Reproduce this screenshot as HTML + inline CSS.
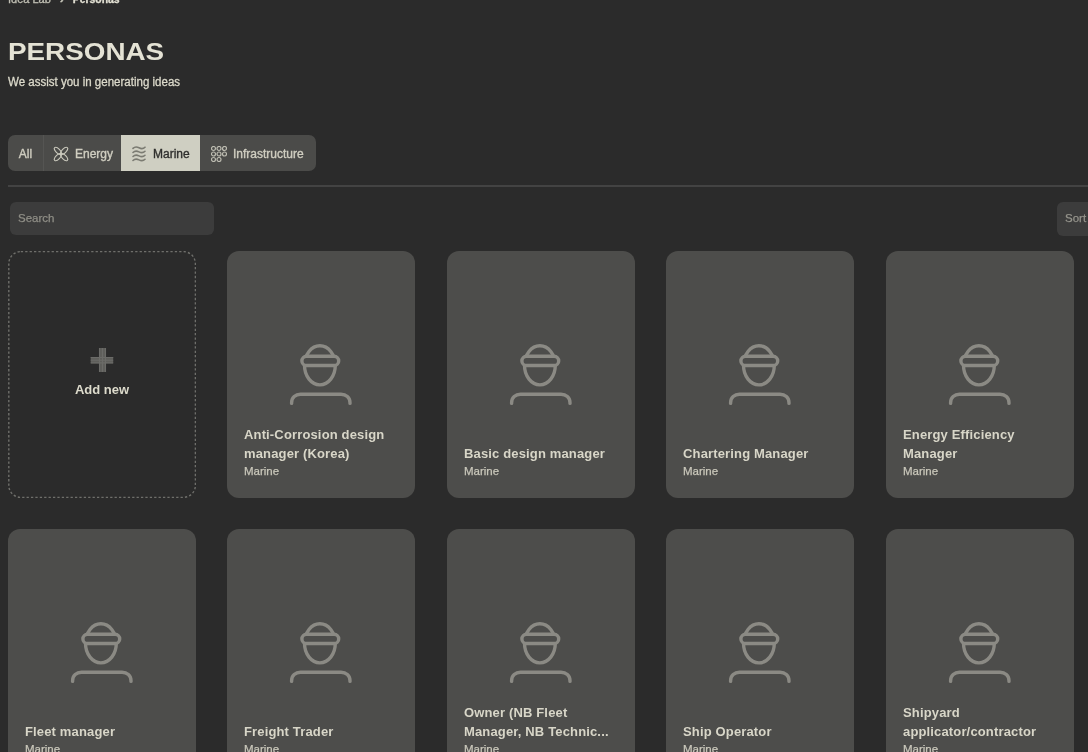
<!DOCTYPE html>
<html><head><meta charset="utf-8">
<style>
*{margin:0;padding:0;box-sizing:border-box}
html,body{width:1088px;height:752px;overflow:hidden;background:#2b2b2b;will-change:transform;font-family:"Liberation Sans",sans-serif;color:#dcdacb}
.abs{position:absolute}
.crumb{left:8px;top:-8.3px;line-height:13px;font-size:11px;color:#c2c1b5;-webkit-text-stroke:0.3px currentColor;white-space:nowrap}
.crumb b{color:#e2e0d3;font-weight:bold;font-size:10.4px}
.crumb i{font-style:normal;display:inline-block;width:22px;text-align:center;font-size:13px;line-height:13px;font-weight:bold}
.title{left:8px;top:39px;font-size:23.5px;font-weight:bold;color:#e4e2d4;white-space:nowrap;transform-origin:0 0;transform:scaleX(1.184)}
.sub{left:8px;top:74.5px;font-size:12px;color:#dcdacb;-webkit-text-stroke:0.3px #dcdacb;white-space:nowrap;transform-origin:0 0;transform:scaleX(0.96)}
.tabs{left:8px;top:135px;width:308px;height:36px;border-radius:7px;background:#4b4b49;overflow:hidden;display:flex}
.tab{height:36px;display:flex;align-items:center;font-size:12px;color:#d0cec1;-webkit-text-stroke:0.35px currentColor;white-space:nowrap;padding-top:1px}
.tab svg{margin-right:6px;flex:none}
.t-all{width:36px;justify-content:center;border-right:1px solid #555553}
.t-en{width:77px;padding-left:9px}
.t-ma{width:79px;padding-left:10px;background:#cfcfc2;color:#2f2f2d}
.t-in{width:116px;padding-left:11px}
.divider{left:8px;top:185px;width:1080px;height:2px;background:#434343}
.search{left:10px;top:201.5px;width:204px;height:33.5px;border-radius:6px;background:#3c3c3c;font-size:11.5px;color:#8f8e86;-webkit-text-stroke:0.25px currentColor;padding-left:8px;line-height:33px}
.sort{left:1056.5px;top:202px;width:60px;height:33.5px;border-radius:6px;background:#3c3c3c;font-size:11.5px;color:#95948c;-webkit-text-stroke:0.25px currentColor;padding-left:8.5px;line-height:32px}
.card{width:188px;height:247px;border-radius:12px;background:#4d4d4b}
.card svg.p{position:absolute;left:0;top:0}
.card .txt{position:absolute;left:17px;bottom:18.3px;right:6px}
.card .nm{font-size:13px;font-weight:bold;line-height:19px;color:#d8d6c8;letter-spacing:0.15px}
.card .cat{font-size:11.5px;line-height:16.5px;color:#c9c7ba;-webkit-text-stroke:0.25px #c9c7ba}
.add{width:188px;height:247px}
.add .lbl{position:absolute;left:0;right:0;top:130.5px;text-align:center;font-size:13px;font-weight:bold;color:#dddbcc}
</style></head><body>
<div class="abs crumb">Idea Lab<i>›</i><b>Personas</b></div>
<div class="abs title">PERSONAS</div>
<div class="abs sub">We assist you in generating ideas</div>
<div class="abs tabs">
  <div class="tab t-all">All</div>
  <div class="tab t-en"><svg width="16" height="16" viewBox="0 0 16 16"><g fill="none" stroke="#c9c8bc" stroke-width="1.15"><ellipse cx="4.85" cy="4.85" rx="4.45" ry="2.1" transform="rotate(45 4.85 4.85)"/><ellipse cx="11.15" cy="11.15" rx="4.45" ry="2.1" transform="rotate(45 11.15 11.15)"/><ellipse cx="11.15" cy="4.85" rx="4.45" ry="2.1" transform="rotate(-45 11.15 4.85)"/><ellipse cx="4.85" cy="11.15" rx="4.45" ry="2.1" transform="rotate(-45 4.85 11.15)"/></g></svg>Energy</div>
  <div class="tab t-ma"><svg width="16" height="16" viewBox="0 0 16 16"><g fill="none" stroke="#7b7b72" stroke-width="1.6" stroke-linecap="round"><path d="M2 2.4 C4 0.4 6 0.8 8 1.8 C10 2.8 12 3.2 14 1.2"/><path d="M2 6.5 C4 4.5 6 4.9 8 5.9 C10 6.9 12 7.3 14 5.3"/><path d="M2 10.5 C4 8.5 6 8.9 8 9.9 C10 10.9 12 11.3 14 9.3"/><path d="M2 14.5 C4 12.5 6 12.9 8 13.9 C10 14.9 12 15.3 14 13.3"/></g></svg>Marine</div>
  <div class="tab t-in"><svg width="16" height="16" viewBox="0 0 16 16"><g fill="none" stroke="#bdbcb1" stroke-width="1.2"><circle cx="2.5" cy="2.5" r="2"/><circle cx="8" cy="2.5" r="2"/><circle cx="13.5" cy="2.5" r="2"/><circle cx="2.5" cy="8" r="2"/><circle cx="8" cy="8" r="2"/><circle cx="13.5" cy="8" r="2"/><circle cx="2.5" cy="13.5" r="2"/><circle cx="8" cy="13.5" r="2"/></g></svg>Infrastructure</div>
</div>
<div class="abs divider"></div>
<div class="abs search">Search</div>
<div class="abs sort">Sort</div>
<div class="abs add" style="left:8px;top:251px"><svg width="188" height="247" viewBox="0 0 188 247" style="position:absolute;left:0;top:0"><rect x="0.8" y="0.6" width="186.6" height="245.8" rx="12" fill="none" stroke="#6f6f6b" stroke-width="1.4" stroke-dasharray="2.3 2.1"/>
<g fill="#5f5f5b"><rect x="91" y="97" width="7" height="24"/><rect x="82.7" y="106" width="22.5" height="6.4"/></g><g stroke="#6d6d69" stroke-width="1.1" fill="none"><path d="M91.5 97V121M97.5 97V121M82.7 106.5H105.2M82.7 111.9H105.2M94.5 97V121M82.7 109.2H105.2" stroke-opacity="0.9"/></g></svg><div class="lbl">Add new</div></div>
<div class="abs card" style="left:227px;top:251px"><svg class="p" width="188" height="247" viewBox="0 0 188 247"><g fill="none" stroke="#8b8a84" stroke-width="3.4" stroke-linecap="round">
<ellipse cx="92.9" cy="114.3" rx="15.4" ry="19.6"/>
<rect x="74.9" y="105.3" width="36.8" height="9.2" rx="4.6" fill="#4d4d4b"/>
<path d="M64.6 152.4 V151.7 C64.6 146.7 68.5 143.2 73.5 143.2 H114 C119 143.2 123 146.7 123 151.7 V152.4"/></g></svg><div class="txt"><div class="nm">Anti-Corrosion design<br>manager (Korea)</div><div class="cat">Marine</div></div></div>
<div class="abs card" style="left:447px;top:251px"><svg class="p" width="188" height="247" viewBox="0 0 188 247"><g fill="none" stroke="#8b8a84" stroke-width="3.4" stroke-linecap="round">
<ellipse cx="92.9" cy="114.3" rx="15.4" ry="19.6"/>
<rect x="74.9" y="105.3" width="36.8" height="9.2" rx="4.6" fill="#4d4d4b"/>
<path d="M64.6 152.4 V151.7 C64.6 146.7 68.5 143.2 73.5 143.2 H114 C119 143.2 123 146.7 123 151.7 V152.4"/></g></svg><div class="txt"><div class="nm">Basic design manager</div><div class="cat">Marine</div></div></div>
<div class="abs card" style="left:666px;top:251px"><svg class="p" width="188" height="247" viewBox="0 0 188 247"><g fill="none" stroke="#8b8a84" stroke-width="3.4" stroke-linecap="round">
<ellipse cx="92.9" cy="114.3" rx="15.4" ry="19.6"/>
<rect x="74.9" y="105.3" width="36.8" height="9.2" rx="4.6" fill="#4d4d4b"/>
<path d="M64.6 152.4 V151.7 C64.6 146.7 68.5 143.2 73.5 143.2 H114 C119 143.2 123 146.7 123 151.7 V152.4"/></g></svg><div class="txt"><div class="nm">Chartering Manager</div><div class="cat">Marine</div></div></div>
<div class="abs card" style="left:886px;top:251px"><svg class="p" width="188" height="247" viewBox="0 0 188 247"><g fill="none" stroke="#8b8a84" stroke-width="3.4" stroke-linecap="round">
<ellipse cx="92.9" cy="114.3" rx="15.4" ry="19.6"/>
<rect x="74.9" y="105.3" width="36.8" height="9.2" rx="4.6" fill="#4d4d4b"/>
<path d="M64.6 152.4 V151.7 C64.6 146.7 68.5 143.2 73.5 143.2 H114 C119 143.2 123 146.7 123 151.7 V152.4"/></g></svg><div class="txt"><div class="nm">Energy Efficiency<br>Manager</div><div class="cat">Marine</div></div></div>
<div class="abs card" style="left:8px;top:529px"><svg class="p" width="188" height="247" viewBox="0 0 188 247"><g fill="none" stroke="#8b8a84" stroke-width="3.4" stroke-linecap="round">
<ellipse cx="92.9" cy="114.3" rx="15.4" ry="19.6"/>
<rect x="74.9" y="105.3" width="36.8" height="9.2" rx="4.6" fill="#4d4d4b"/>
<path d="M64.6 152.4 V151.7 C64.6 146.7 68.5 143.2 73.5 143.2 H114 C119 143.2 123 146.7 123 151.7 V152.4"/></g></svg><div class="txt"><div class="nm">Fleet manager</div><div class="cat">Marine</div></div></div>
<div class="abs card" style="left:227px;top:529px"><svg class="p" width="188" height="247" viewBox="0 0 188 247"><g fill="none" stroke="#8b8a84" stroke-width="3.4" stroke-linecap="round">
<ellipse cx="92.9" cy="114.3" rx="15.4" ry="19.6"/>
<rect x="74.9" y="105.3" width="36.8" height="9.2" rx="4.6" fill="#4d4d4b"/>
<path d="M64.6 152.4 V151.7 C64.6 146.7 68.5 143.2 73.5 143.2 H114 C119 143.2 123 146.7 123 151.7 V152.4"/></g></svg><div class="txt"><div class="nm">Freight Trader</div><div class="cat">Marine</div></div></div>
<div class="abs card" style="left:447px;top:529px"><svg class="p" width="188" height="247" viewBox="0 0 188 247"><g fill="none" stroke="#8b8a84" stroke-width="3.4" stroke-linecap="round">
<ellipse cx="92.9" cy="114.3" rx="15.4" ry="19.6"/>
<rect x="74.9" y="105.3" width="36.8" height="9.2" rx="4.6" fill="#4d4d4b"/>
<path d="M64.6 152.4 V151.7 C64.6 146.7 68.5 143.2 73.5 143.2 H114 C119 143.2 123 146.7 123 151.7 V152.4"/></g></svg><div class="txt"><div class="nm">Owner (NB Fleet<br>Manager, NB Technic...</div><div class="cat">Marine</div></div></div>
<div class="abs card" style="left:666px;top:529px"><svg class="p" width="188" height="247" viewBox="0 0 188 247"><g fill="none" stroke="#8b8a84" stroke-width="3.4" stroke-linecap="round">
<ellipse cx="92.9" cy="114.3" rx="15.4" ry="19.6"/>
<rect x="74.9" y="105.3" width="36.8" height="9.2" rx="4.6" fill="#4d4d4b"/>
<path d="M64.6 152.4 V151.7 C64.6 146.7 68.5 143.2 73.5 143.2 H114 C119 143.2 123 146.7 123 151.7 V152.4"/></g></svg><div class="txt"><div class="nm">Ship Operator</div><div class="cat">Marine</div></div></div>
<div class="abs card" style="left:886px;top:529px"><svg class="p" width="188" height="247" viewBox="0 0 188 247"><g fill="none" stroke="#8b8a84" stroke-width="3.4" stroke-linecap="round">
<ellipse cx="92.9" cy="114.3" rx="15.4" ry="19.6"/>
<rect x="74.9" y="105.3" width="36.8" height="9.2" rx="4.6" fill="#4d4d4b"/>
<path d="M64.6 152.4 V151.7 C64.6 146.7 68.5 143.2 73.5 143.2 H114 C119 143.2 123 146.7 123 151.7 V152.4"/></g></svg><div class="txt"><div class="nm">Shipyard<br>applicator/contractor</div><div class="cat">Marine</div></div></div>
</body></html>
